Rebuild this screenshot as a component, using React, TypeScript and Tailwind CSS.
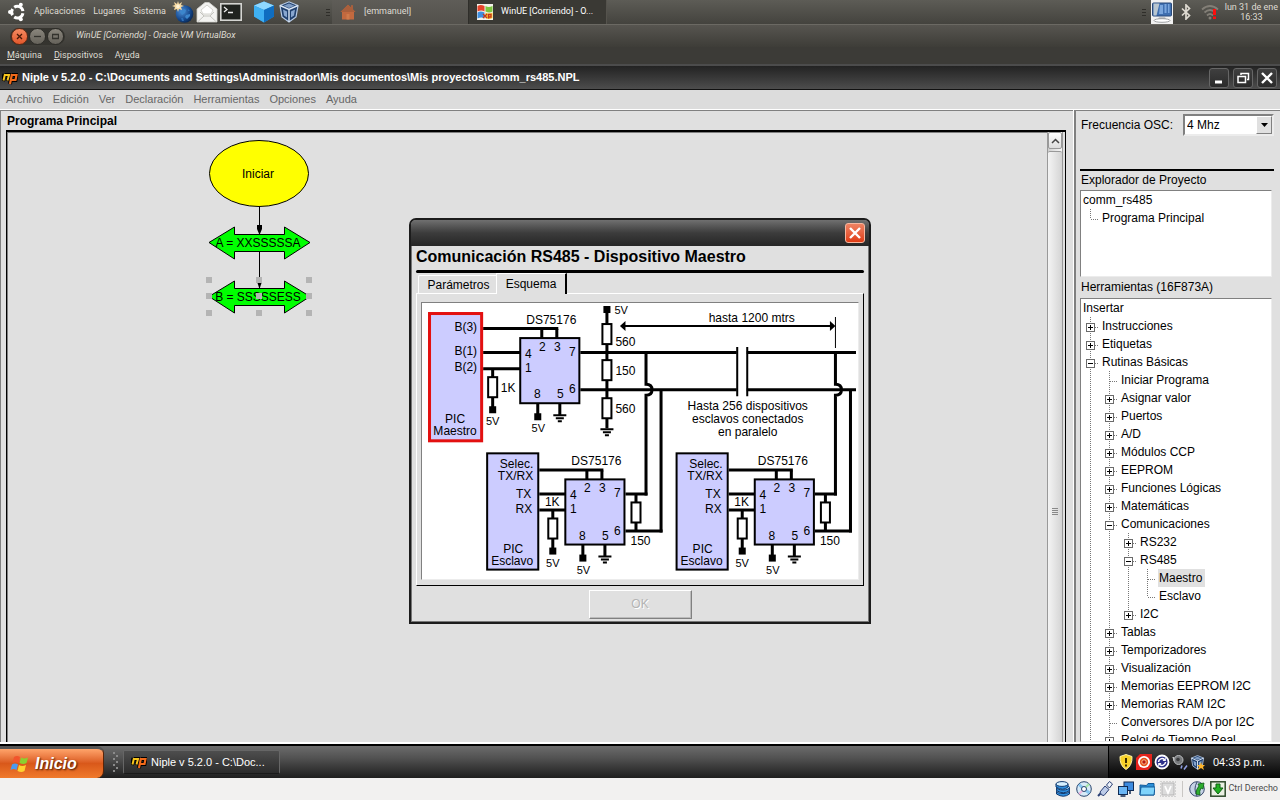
import React from "react";

const UI = "font-['Liberation_Sans',Arial,sans-serif]";
const GNOME = "font-['Roboto','Noto_Sans',sans-serif]";

/* ---------- Icons ---------- */

function UbuntuIcon() {
  return (
    <svg width="20" height="20" viewBox="0 0 20 20" fill="none" stroke="#fff" strokeWidth="3">
      <path d="M7.2 5.2A5.6 5.6 0 0 1 15.9 9.2M15.9 11.2A5.6 5.6 0 0 1 7.2 15M5.6 13.2A5.6 5.6 0 0 1 5.6 7" />
      <g fill="#fff" stroke="none">
        <circle cx="3" cy="10" r="2" />
        <circle cx="13.8" cy="2.8" r="2" />
        <circle cx="13.8" cy="17.2" r="2" />
      </g>
    </svg>
  );
}

function GlobeIcon() {
  return (
    <svg width="22" height="22" viewBox="0 0 22 22">
      <defs>
        <radialGradient id="globe" cx="0.35" cy="0.35" r="0.8">
          <stop offset="0" stopColor="#4d8fd6" />
          <stop offset="0.6" stopColor="#14478c" />
          <stop offset="1" stopColor="#031a3c" />
        </radialGradient>
      </defs>
      <circle cx="12.5" cy="13" r="8.8" fill="url(#globe)" />
      <path d="M8 11l4-3 2 1-1 3-3 2zM14 14l4-1 0 2-3 3-2-2z" fill="#3c86cc" />
      <path d="M9 17l2 0 1 3-2 0zM16 8l2 2-2 0z" fill="#2d6fb8" />
      <path d="M6 0l1 3 3-2-1 3 3 1-3 1 1 3-3-1-1 3-1-3-3 1 1-3-3-1 3-1-1-3 3 2z" fill="#f6d9a2" />
      <circle cx="6" cy="5.4" r="1.8" fill="#fff4d8" />
    </svg>
  );
}

function MailIcon() {
  return (
    <svg width="22" height="22" viewBox="0 0 22 22">
      <path d="M1 8L9 1.5h4L21 8v13H1z" fill="#f3f3f1" stroke="#d0d0cc" strokeWidth="0.8" />
      <path d="M5 9l6-5 6 5-2 4H7z" fill="#fff" stroke="#c9c9c4" strokeWidth="0.8" />
      <path d="M2 20.500l6-5.500h6l6 5.500M4 11l4 4M18 11l-4 4" fill="none" stroke="#c4c4bf" strokeWidth="1" />
    </svg>
  );
}

function TerminalIcon() {
  return (
    <svg width="22" height="18" viewBox="0 0 22 18">
      <rect x="0.8" y="0.8" width="20.4" height="16.4" fill="#20231f" stroke="#d5d5d2" strokeWidth="1.6" />
      <path d="M4 4l3 2.5L4 9M8 9.5h5" fill="none" stroke="#e9e9e9" strokeWidth="1.3" />
    </svg>
  );
}

function BlueCubeIcon() {
  return (
    <svg width="22" height="22" viewBox="0 0 22 22">
      <path d="M1 4.5L11 0.5l10 4v11L11 21.5 1 15.5z" fill="#1e8fe0" />
      <path d="M1 4.5L11 0.5l10 4L11 9z" fill="#8fd8ff" />
      <path d="M1 4.5L11 9v12.5L1 15.5z" fill="#3fb0f2" />
      <path d="M21 4.5L11 9v12.5l10-6z" fill="#0f6dc0" />
    </svg>
  );
}

function VBoxIcon({ size = 22 }: { size?: number }) {
  return (
    <svg width={size} height={size} viewBox="0 0 22 22">
      <path d="M2 4.5L11 0.8l9 3.7-2 11.5-7 5-7-5z" fill="#20406e" stroke="#b9cce6" strokeWidth="1.2" />
      <path d="M2 4.5L11 8.5l9-4M11 8.5V21" fill="none" stroke="#dce7f5" strokeWidth="1.4" />
      <path d="M5.5 4.7L11 2.4l5.5 2.3L11 7z" fill="#7f9cc4" />
      <path d="M5 8.5l4 2v6l-3-2zM17 8.5l-4 2v6l3-2z" fill="#88a6cf" />
    </svg>
  );
}

function HomeIcon() {
  return (
    <svg width="16" height="16" viewBox="0 0 16 16">
      <path d="M8 0.8L0.5 8H2v7.5h12V8h1.5L13 5.6V1.5h-2v2.1z" fill="#c2693f" />
      <path d="M8 0.8L0.5 8h15L13 5.6V1.5h-2v2.1z" fill="#a95f3c" />
      <path d="M6.5 15.5V10h3v5.500z" fill="#d07a4b" />
    </svg>
  );
}

function XpBoxIcon() {
  return (
    <svg width="16" height="16" viewBox="0 0 16 16">
      <rect width="16" height="16" fill="#f4f2ea" />
      <path d="M0.500 2q3-2 7 0v5.500q-3-2-7 0z" fill="#e8432a" />
      <path d="M8.500 2q3 2 7 0v5.500q-3 2-7 0z" fill="#7cc63e" />
      <path d="M0.500 8.500q3-2 7 0v6q-3-2-7 0z" fill="#3f8fe0" />
      <path d="M8.500 8.500q3 2 7 0v5.500q-3 2-7 0z" fill="#f6c12e" />
      <path d="M6 10l4 4M10 10l-4 4M11.500 14.500v-4h2.500v2.500h-2.500" fill="none" stroke="#c3361b" strokeWidth="1.300" />
    </svg>
  );
}

function MonitorIcon() {
  return (
    <svg width="22" height="24" viewBox="0 0 22 24">
      <rect width="22" height="24" fill="#f1f1f1" />
      <rect x="1.5" y="3" width="19" height="13" rx="1" fill="#3f6fb0" stroke="#2a4a7a" />
      <path d="M2.500 3.500h6l-3 12h-3z" fill="#b9c6cf" />
      <path d="M9 5h3v9H8zM13.500 4h2v9h-2zM17 4h1.500v9H17z" fill="#7aa6dd" />
      <path d="M8 17h6l1 2H7z" fill="#c4c6c8" />
      <ellipse cx="11" cy="20.500" rx="8" ry="1.800" fill="#fff" stroke="#8a8d90" strokeWidth="0.8" />
    </svg>
  );
}

function BluetoothIcon() {
  return (
    <svg width="10" height="16" viewBox="0 0 10 16" fill="none" stroke="#dfdbd2" strokeWidth="1.700">
      <path d="M1 4.500l7.500 7L5 15V1l3.500 3.500-7.500 7" />
    </svg>
  );
}

function WifiAlertIcon() {
  return (
    <svg width="18" height="16" viewBox="0 0 18 16">
      <g fill="none" stroke="#837f77" strokeWidth="1.800">
        <path d="M1 5.500q8-7 16 0" />
        <path d="M3.500 8.500q5.500-5 11 0" />
        <path d="M6 11.500q3-3 6 0" />
      </g>
      <circle cx="9" cy="14" r="1.500" fill="#837f77" />
      <path d="M12 5h3v6h-3zM12 12.500h3v2.500h-3z" fill="#ff0d0d" />
    </svg>
  );
}

function NipleIcon() {
  return (
    <svg width="16" height="14" viewBox="0 0 16 14" fill="none">
      <path d="M2.500 3L1 10M2.500 4h4.500L5.500 10" stroke="#000" strokeWidth="4" />
      <path d="M10 3L8 13M10 4h4.500l-1 5H9" stroke="#000" strokeWidth="4" />
      <path d="M3 3L1.500 9.500M3 4h4L5.500 9.500" stroke="#f7c51c" strokeWidth="2" />
      <path d="M10 3L8 13M10 4h4.500l-1 5H9" stroke="#f26a1a" strokeWidth="2.200" />
    </svg>
  );
}

function WindowsFlag() {
  return (
    <svg width="20" height="18" viewBox="0 0 20 18">
      <path d="M4 2q3-2 6 0L8.500 8q-3-2-6 0z" fill="#f2552c" />
      <path d="M11 2.500q3 2 7 0L16.500 8q-3 2-7 0z" fill="#8bd02f" />
      <path d="M2 9.500q3-2 6 0L6.500 15q-3-2-6 0z" fill="#4b9bf0" />
      <path d="M9 10q3 2 7 0L14.500 16q-3 2-7 0z" fill="#ffd12f" />
    </svg>
  );
}

function TrayIcons() {
  return (
    <div className="flex items-center gap-[2px]">
      <svg width="16" height="16" viewBox="0 0 16 16">
        <path d="M8 0.500l6 2q.5 9-6 13Q1.500 11.500 2 2.500z" fill="#f8d22a" stroke="#fff3a8" />
        <path d="M7 4h2v5H7zM7 10.500h2v2H7z" fill="#3a2c00" />
      </svg>
      <svg width="16" height="16" viewBox="0 0 16 16">
        <path d="M4 0h12v12l-4 4H0V4z" fill="#e5241d" />
        <circle cx="8" cy="8" r="6" fill="#fff" />
        <circle cx="8" cy="8" r="4.200" fill="#e5541d" />
        <circle cx="8" cy="8" r="2.200" fill="#b9170c" stroke="#ffd7a8" strokeWidth="0.800" />
      </svg>
      <svg width="16" height="16" viewBox="0 0 16 16">
        <circle cx="8" cy="8" r="6.500" fill="#2c2f8a" stroke="#fff" strokeWidth="1.800" />
        <path d="M4.500 8a3.500 3.500 0 0 1 6-2.300M11.500 8a3.500 3.500 0 0 1-6 2.300" fill="none" stroke="#fff" strokeWidth="1.500" />
        <path d="M11.800 3.500v3.500H8.500zM4.200 12.500V9h3.300z" fill="#fff" />
      </svg>
      <svg width="16" height="16" viewBox="0 0 16 16">
        <path d="M1 3l3 5-2-1z" fill="#bbb" stroke="#ccc" />
        <circle cx="6.500" cy="6" r="4.500" fill="#77797c" stroke="#b9bbbd" />
        <circle cx="6" cy="5.500" r="1.800" fill="#3a3b3d" />
        <path d="M9 14.500l1-3M12 15.500l3-4" fill="none" stroke="#8f9ee0" strokeWidth="1.600" />
      </svg>
      <span className="relative flex">
        <VBoxIcon size={15} />
        <svg className="absolute right-0 bottom-0" width="8" height="8" viewBox="0 0 8 8">
          <path d="M4 0l1 3h3L6 5l1 3-3-2-3 2 1-3-2-2h3z" fill="#ffb52b" />
        </svg>
      </span>
    </div>
  );
}

const statusIcons: { name: string; art: React.ReactNode }[] = [
  {
    name: "Discos duros",
    art: (
      <g stroke="#123a6e" strokeWidth="1">
        <path d="M1.500 10v3q7 4.500 13 0v-3z" fill="#2f8fe0" />
        <ellipse cx="8" cy="10" rx="6.500" ry="2.500" fill="#9fd8ff" />
        <path d="M1.500 6.500v3q7 4.500 13 0v-3z" fill="#2f8fe0" />
        <ellipse cx="8" cy="6.500" rx="6.500" ry="2.500" fill="#9fd8ff" />
        <path d="M1 3v3q7 4.500 12 0V3z" fill="#2f8fe0" />
        <ellipse cx="7" cy="3" rx="6" ry="2.400" fill="#d6f0ff" />
      </g>
    ),
  },
  {
    name: "CD/DVD",
    art: (
      <g>
        <circle cx="8" cy="8" r="7.300" fill="#d8ebf8" stroke="#28456e" />
        <path d="M8 8L3 3.500M8 8l5.500 4" stroke="#86c6f0" strokeWidth="3" />
        <path d="M8 8l5-5" stroke="#a7e7a9" strokeWidth="2" />
        <path d="M8 8l-5 5" stroke="#f2b9e0" strokeWidth="2" />
        <circle cx="8" cy="8" r="2.500" fill="#fff" stroke="#28456e" />
      </g>
    ),
  },
  {
    name: "USB",
    art: (
      <g stroke="#2a3f74" strokeWidth="1">
        <path d="M1 15l3-3" strokeWidth="2" />
        <path d="M3 11l5-6 4 3.500-5 6q-3 .5-4-3.500z" fill="#bccbe8" />
        <path d="M9.500 4l3-3.500 3 2.500-3 4z" fill="#eef3fb" />
      </g>
    ),
  },
  {
    name: "Red",
    art: (
      <g>
        <rect x="6" y="1" width="9.500" height="8.500" fill="#3c8be0" stroke="#102a52" />
        <rect x="0.500" y="5.500" width="9" height="8" fill="#6bb6f5" stroke="#102a52" />
        <path d="M2.500 15h5M12 10v3" stroke="#102a52" strokeWidth="1.500" />
      </g>
    ),
  },
  {
    name: "Carpetas compartidas",
    art: (
      <g stroke="#125a99">
        <path d="M1 4V14h14V2.500H9L7.500 4.500z" fill="#2a8fd8" />
        <path d="M1 14l1-8h14l-1 8z" fill="#7fd3fb" />
      </g>
    ),
  },
  {
    name: "Virtualización",
    art: (
      <g stroke="#b5b5b5" fill="none">
        <rect x="2" y="2" width="12" height="12" fill="#dcdcdc" />
        <rect x="0.500" y="0.500" width="15" height="15" strokeDasharray="1 2" />
        <path d="M5 5l3 7 3-7" stroke="#fff" strokeWidth="1.800" />
      </g>
    ),
  },
];

/* ---------- Host desktop ---------- */

function Grip() {
  return (
    <span className="flex flex-col gap-[2px]" aria-hidden="true">
      <i className="block h-px w-[4px] bg-[#2f2e2a]" />
      <i className="block h-px w-[4px] bg-[#2f2e2a]" />
      <i className="block h-px w-[4px] bg-[#2f2e2a]" />
    </span>
  );
}

function HostPanel() {
  return (
    <header className={`flex h-[24px] shrink-0 items-center bg-linear-to-b from-[#5d5c56] to-[#44433e] text-[9px] text-[#dfdbd2] ${GNOME}`}>
      <div className="flex w-[332px] shrink-0 items-center pl-[7px]">
        <UbuntuIcon />
        <nav className="ml-[7px] flex gap-[8px]">
          <button>Aplicaciones</button>
          <button>Lugares</button>
          <button>Sistema</button>
        </nav>
        <div className="ml-[6px] flex items-center gap-[2px]">
          <GlobeIcon />
          <MailIcon />
          <TerminalIcon />
        </div>
        <div className="ml-[11px] flex items-center gap-[3px]">
          <BlueCubeIcon />
          <VBoxIcon />
        </div>
        <div className="mr-[2px] ml-auto">
          <Grip />
        </div>
      </div>
      <button className="flex h-full w-[137px] items-center gap-[8px] border-r border-[#2f2e2a] bg-linear-to-b from-[#5f5d58] to-[#53514c] pl-[8px]">
        <HomeIcon />
        [emmanuel]
      </button>
      <button className="flex h-full w-[138px] items-center gap-[8px] border-r border-[#55534d] bg-[#3a3934] pl-[8px] text-white">
        <XpBoxIcon />
        WinUE [Corriendo] - O...
      </button>
      <div className="ml-auto flex h-full items-center pr-[2px]">
        <Grip />
        <span className="ml-[5px]"><MonitorIcon /></span>
        <span className="ml-[8px]"><BluetoothIcon /></span>
        <span className="ml-[10px]"><WifiAlertIcon /></span>
        <time className="ml-[6px] text-center leading-[10px]">
          lun 31 de ene
          <br />
          16:33
        </time>
      </div>
    </header>
  );
}

function HostWindowChrome() {
  return (
    <div className={`shrink-0 text-[#dfdbd2] ${GNOME}`}>
      <div className="flex h-[23px] items-center border-t border-[#6b6963] bg-linear-to-b from-[#575550] to-[#3e3d38] pl-[10px]">
        <div className="flex items-center gap-[1px] rounded-full bg-[#35342f] px-px">
          <button aria-label="Cerrar" className="flex size-[17px] items-center justify-center rounded-full border border-[#5e2a14] bg-linear-to-b from-[#f58a60] to-[#e2572a]">
            <svg width="7" height="7" viewBox="0 0 7 7" stroke="#4a1a08" strokeWidth="1.300"><path d="M1 1l5 5M6 1L1 6" /></svg>
          </button>
          <button aria-label="Minimizar" className="flex size-[17px] items-center justify-center rounded-full border border-[#2d2c28] bg-linear-to-b from-[#8a867d] to-[#65625a]">
            <svg width="7" height="7" viewBox="0 0 7 7" stroke="#33322d" strokeWidth="1.300"><path d="M0 3.500h7" /></svg>
          </button>
          <button aria-label="Maximizar" className="flex size-[17px] items-center justify-center rounded-full border border-[#2d2c28] bg-linear-to-b from-[#8a867d] to-[#65625a]">
            <svg width="7" height="7" viewBox="0 0 7 7" stroke="#33322d" strokeWidth="1.300" fill="none"><path d="M.5 1.500h6v4h-6z" /></svg>
          </button>
        </div>
        <span className="ml-[11px] text-[9px] italic">WinUE [Corriendo] - Oracle VM VirtualBox</span>
      </div>
      <nav className="flex h-[17px] items-center gap-[12px] bg-[#3c3b37] pl-[7px] text-[9px]">
        <button><u>M</u>áquina</button>
        <button><u>D</u>ispositivos</button>
        <button>Ay<u>u</u>da</button>
      </nav>
    </div>
  );
}

/* ---------- Guest application ---------- */

function TitleButton({ label, children }: { label: string; children: React.ReactNode }) {
  return (
    <button aria-label={label} className="flex size-[20px] items-center justify-center rounded-[3px] border border-[#666] bg-linear-to-b from-[#3f3f3f] to-[#2b2b2b]">
      <svg width="14" height="14" viewBox="0 0 14 14" fill="none" stroke="#fff" strokeWidth="2">{children}</svg>
    </button>
  );
}

function AppTitle() {
  return (
    <div className="flex h-[26px] shrink-0 items-center border-t-2 border-b border-t-[#4c4c4c] border-b-[#111] bg-linear-to-b from-[#232323] to-[#4d4d4d] pr-[3px] pl-[2px]">
      <NipleIcon />
      <h1 className="ml-[4px] text-[11px] font-bold whitespace-nowrap text-white">
        Niple v 5.2.0 - C:\Documents and Settings\Administrador\Mis documentos\Mis proyectos\comm_rs485.NPL
      </h1>
      <div className="ml-auto flex gap-[4px]">
        <TitleButton label="Minimizar"><path d="M3 11h7" strokeWidth="3" /></TitleButton>
        <TitleButton label="Restaurar">
          <path d="M5 4V2.500h7.500v6H11" strokeWidth="1.500" />
          <path d="M2 5.500h7.500v6H2z" strokeWidth="1.500" />
        </TitleButton>
        <TitleButton label="Cerrar"><path d="M2 2l10 10M12 2L2 12" strokeWidth="2.400" /></TitleButton>
      </div>
    </div>
  );
}

const menus = ["Archivo", "Edición", "Ver", "Declaración", "Herramientas", "Opciones", "Ayuda"];

type Row = { label: string; depth: number; kind?: "+" | "-"; selected?: boolean };

const projectRows: Row[] = [
  { label: "comm_rs485", depth: 0 },
  { label: "Programa Principal", depth: 1 },
];

const toolRows: Row[] = [
  { label: "Insertar", depth: 0 },
  { label: "Instrucciones", depth: 1, kind: "+" },
  { label: "Etiquetas", depth: 1, kind: "+" },
  { label: "Rutinas Básicas", depth: 1, kind: "-" },
  { label: "Iniciar Programa", depth: 2 },
  { label: "Asignar valor", depth: 2, kind: "+" },
  { label: "Puertos", depth: 2, kind: "+" },
  { label: "A/D", depth: 2, kind: "+" },
  { label: "Módulos CCP", depth: 2, kind: "+" },
  { label: "EEPROM", depth: 2, kind: "+" },
  { label: "Funciones Lógicas", depth: 2, kind: "+" },
  { label: "Matemáticas", depth: 2, kind: "+" },
  { label: "Comunicaciones", depth: 2, kind: "-" },
  { label: "RS232", depth: 3, kind: "+" },
  { label: "RS485", depth: 3, kind: "-" },
  { label: "Maestro", depth: 4, selected: true },
  { label: "Esclavo", depth: 4 },
  { label: "I2C", depth: 3, kind: "+" },
  { label: "Tablas", depth: 2, kind: "+" },
  { label: "Temporizadores", depth: 2, kind: "+" },
  { label: "Visualización", depth: 2, kind: "+" },
  { label: "Memorias EEPROM I2C", depth: 2, kind: "+" },
  { label: "Memorias RAM I2C", depth: 2, kind: "+" },
  { label: "Conversores D/A por I2C", depth: 2 },
  { label: "Reloj de Tiempo Real", depth: 2, kind: "+" },
];

function continues(rows: Row[], index: number, depth: number, openDepth: number) {
  for (let i = index + 1; i < rows.length; i++) {
    if (rows[i].depth < depth) return false;
    if (rows[i].depth === depth) return true;
  }
  return depth <= openDepth;
}

function Tree({ rows, openDepth = 0, label }: { rows: Row[]; openDepth?: number; label: string }) {
  return (
    <ul role="tree" aria-label={label} className="pl-[2px] text-[12px] whitespace-nowrap">
      {rows.map((row, i) => (
        <li key={row.label} role="treeitem" aria-level={row.depth + 1} aria-selected={!!row.selected} className="flex h-[18px]">
          {Array.from({ length: row.depth }, (_, c) => {
            const own = c === row.depth - 1;
            const down = continues(rows, i, c + 1, openDepth);
            return (
              <svg key={c} width="19" height="18" viewBox="0 0 19 18" fill="none" stroke="#777" className="shrink-0">
                {(own || down) && <path d={down ? "M7.500 0V18" : "M7.500 0V10"} strokeDasharray="1 1" />}
                {own && <path d="M8 10.500H16" strokeDasharray="1 1" />}
                {own && row.kind && (
                  <>
                    <rect x="3.500" y="6.500" width="8" height="8" fill="#fff" stroke="#6b6b6b" />
                    <path d={row.kind === "+" ? "M5 10.500H10M7.500 8V13" : "M5 10.500H10"} stroke="#000" />
                  </>
                )}
              </svg>
            );
          })}
          <button className={`-ml-[1px] flex h-[18px] items-center px-[1px] ${row.selected ? "bg-[#e0e0e0] pr-[3px]" : ""}`}>{row.label}</button>
        </li>
      ))}
    </ul>
  );
}

const sunken = "border-2 border-t-[#808080] border-l-[#808080] border-r-[#ececec] border-b-[#ececec] bg-white";
const sunkenThin = "border border-t-[#808080] border-l-[#808080] border-r-[#ececec] border-b-[#ececec] bg-white";

function Sidebar() {
  return (
    <aside className="flex w-[206px] shrink-0 flex-col border-t border-l-2 border-[#808080] bg-[#e0e0e0] pr-[6px] pl-[4px] text-[12px]">
      <div className="flex items-center justify-between pt-[3px] pl-px">
        <label htmlFor="osc">Frecuencia OSC:</label>
        <span className={`relative flex h-[22px] w-[91px] ${sunken}`}>
          <select id="osc" className="w-full appearance-none pl-[2px] text-[12px]" defaultValue="4">
            <option value="4">4 Mhz</option>
          </select>
          <span className="pointer-events-none absolute top-0 right-0 flex h-full w-[16px] items-center justify-center border border-t-white border-r-[#808080] border-b-[#808080] border-l-white bg-[#e0e0e0]">
            <svg width="7" height="4" viewBox="0 0 7 4"><path d="M0 0h7L3.500 4z" /></svg>
          </span>
        </span>
      </div>
      <hr className="mt-[33px] h-[2px] shrink-0 border-0 bg-black" />
      <h2 className="h-[19px] shrink-0 pl-px leading-[19px]">Explorador de Proyecto</h2>
      <div className={`mr-[2px] h-[87px] shrink-0 ${sunkenThin}`}>
        <Tree rows={projectRows} label="Explorador de Proyecto" />
      </div>
      <h2 className="h-[21px] shrink-0 pl-px leading-[21px]">Herramientas (16F873A)</h2>
      <div className={`mr-[2px] min-h-0 flex-1 overflow-hidden ${sunkenThin}`}>
        <Tree rows={toolRows} openDepth={2} label="Herramientas" />
      </div>
    </aside>
  );
}

const handles = [
  [206, 277], [256, 277], [306, 277],
  [206, 293], [256, 293], [306, 293],
  [206, 310], [256, 310], [306, 310],
];

function FlowChart() {
  return (
    <svg width="320" height="200" viewBox="8 133 320 200" className={UI} fontSize="12" textAnchor="middle">
      <ellipse cx="259" cy="173.500" rx="49.500" ry="33" fill="#ff0" stroke="#000" />
      <text x="258" y="178">Iniciar</text>
      <path d="M259.500 207V234M259.500 251V288" stroke="#000" />
      <path d="M257 225h5v4l-2.500 6-2.500-6z" />
      <path d="M209 242.500L234.500 227v7.500h50V227L310 242.500 284.500 259v-7.500h-50V259z" fill="#0f0" stroke="#000" />
      <path d="M209 296.500L234.500 281v7.500h50V281L310 296.500 284.500 313v-7.500h-50V313z" fill="#0f0" stroke="#000" />
      <path d="M257.500 283h4l-2 6z" />
      <text x="258" y="247">A = XXSSSSSA</text>
      <text x="258" y="301">B = SSSSSESS</text>
      {handles.map(([x, y]) => (
        <rect key={`${x}-${y}`} x={x} y={y} width="6" height="6" fill="#b4b4b4" />
      ))}
    </svg>
  );
}

function ProgramPanel() {
  return (
    <main className="flex min-w-0 flex-1 flex-col border-t border-l border-[#808080] bg-[#e0e0e0] pr-[7px]">
      <h2 className="h-[19px] pl-[6px] text-[12px] leading-[20px] font-bold">Programa Principal</h2>
      <div className="ml-[5px] flex min-h-0 flex-1 border-t-2 border-r border-l border-black">
        <div className="min-w-0 flex-1 overflow-hidden border-t border-l border-[#808080]">
          <FlowChart />
        </div>
        <div className="mr-[2px] flex w-[16px] flex-col border-x border-[#999] bg-linear-to-r from-[#cfcfcf] to-[#f8f8f8]">
          <button aria-label="Subir" className="flex h-[17px] items-center justify-center rounded-[2px] border border-[#999] bg-linear-to-b from-white to-[#dcdcdc]">
            <svg width="9" height="6" viewBox="0 0 9 6" fill="none" stroke="#444" strokeWidth="1.500"><path d="M1 5l3.500-3.500L8 5" /></svg>
          </button>
          <div className="mt-[2px] flex flex-1 items-center justify-center rounded-t-[2px] border-t border-[#999] bg-linear-to-r from-[#f4f4f4] to-[#d4d4d4] pt-[128px]">
            <span className="flex flex-col gap-px">
              <i className="block h-px w-[6px] bg-[#888]" />
              <i className="block h-px w-[6px] bg-[#888]" />
              <i className="block h-px w-[6px] bg-[#888]" />
              <i className="block h-px w-[6px] bg-[#888]" />
            </span>
          </div>
        </div>
      </div>
    </main>
  );
}

/* ---------- RS485 schematic ---------- */

function Ground({ x, y }: { x: number; y: number }) {
  return <path d={`M${x - 6.5} ${y}h13M${x - 4} ${y + 3}h8M${x - 2} ${y + 6}h4`} strokeWidth="2" />;
}

function Transceiver({ x, y }: { x: number; y: number }) {
  return (
    <g transform={`translate(${x} ${y})`}>
      <path d="M21.500 -9V0M36.500 -9V0M17.500 65V77M39.500 65V77" strokeWidth="3" />
      <rect x="0" y="0" width="59" height="65" fill="#ccf" strokeWidth="2" />
      <rect x="14" y="75" width="7" height="7" fill="#000" stroke="none" />
      <Ground x={39.5} y={77} />
      <g fill="#000" stroke="none" textAnchor="middle">
        <text x="8" y="20">4</text>
        <text x="8" y="34">1</text>
        <text x="22" y="13">2</text>
        <text x="37" y="13">3</text>
        <text x="52" y="18">7</text>
        <text x="52" y="55">6</text>
        <text x="17" y="60">8</text>
        <text x="40" y="60">5</text>
        <text x="18" y="94" fontSize="11">5V</text>
      </g>
    </g>
  );
}

function PullUp({ x, y }: { x: number; y: number }) {
  return (
    <g transform={`translate(${x} ${y})`}>
      <path d="M0 0V40" strokeWidth="3" />
      <rect x="-4.500" y="9" width="9" height="20" fill="#fff" strokeWidth="2" />
      <rect x="-3.500" y="38" width="7" height="7" fill="#000" stroke="none" />
      <text x="0" y="57" fontSize="11" textAnchor="middle" fill="#000" stroke="none">5V</text>
    </g>
  );
}

function Slave({ dx, chipLabelX }: { dx: number; chipLabelX: number }) {
  return (
    <g transform={`translate(${dx} 0)`}>
      <path d="M539 469.500H603M539 493.500H565M539 509.500H565M625 493.500H647M625 530.500H662M635.500 493V530" strokeWidth="3" />
      <rect x="487" y="453" width="51" height="116" fill="#ccf" strokeWidth="2" />
      <Transceiver x={565} y={479} />
      <PullUp x={552.5} y={509} />
      <rect x="631" y="502" width="9" height="20" fill="#fff" strokeWidth="2" />
      <g fill="#000" stroke="none">
        <g textAnchor="end">
          <text x="533" y="468">Selec.</text>
          <text x="533" y="480">TX/RX</text>
          <text x="531" y="498">TX</text>
          <text x="532" y="513">RX</text>
        </g>
        <g textAnchor="middle">
          <text x="513" y="552">PIC</text>
          <text x="512" y="564">Esclavo</text>
          <text x={chipLabelX} y="465">DS75176</text>
          <text x="552" y="506">1K</text>
        </g>
        <text x="630" y="544">150</text>
      </g>
    </g>
  );
}

function Schematic() {
  return (
    <svg viewBox="422 303 435 275" className={`block w-full ${UI}`} fontSize="12" fill="none" stroke="#000" role="img" aria-label="Esquema RS485">
      <path d="M483 328.500H558M483 352.500H520M483 368.500H520" strokeWidth="3" />
      <path d="M580 352.500H736M746 352.500H855M580 389.500H736M746 389.500H855" strokeWidth="3" />
      <path d="M736.500 347V396M746.500 347V396" strokeWidth="2" />
      <rect x="429.500" y="313.500" width="52" height="127" fill="#ccf" stroke="#e31010" strokeWidth="3" />
      <Transceiver x={520} y={338} />
      <PullUp x={492.5} y={368} />

      <path d="M606.500 310V428" strokeWidth="3" />
      <rect x="603" y="306" width="7" height="7" fill="#000" stroke="none" />
      <g fill="#fff" strokeWidth="2">
        <rect x="602" y="324" width="9" height="20" />
        <rect x="602" y="360" width="9" height="20" />
        <rect x="602" y="398" width="9" height="20" />
      </g>
      <Ground x={606.5} y={429} />

      <path d="M622 326H832" strokeWidth="2" />
      <path d="M619.500 326l5.500-5v10zM834.500 326l-5.500-5v10z" fill="#000" stroke="none" />
      <path d="M834.500 317V348" />

      <path d="M645.500 352V384q6 0 6 5.500t-6 5.500V495M834.500 352V384q6 0 6 5.500t-6 5.500V495" strokeWidth="3" />
      <path d="M660.500 389V532M849.500 389V532" strokeWidth="3" />

      <Slave dx={0} chipLabelX={596} />
      <Slave dx={189} chipLabelX={593} />

      <g fill="#000" stroke="none">
        <g textAnchor="end">
          <text x="477" y="331">B(3)</text>
          <text x="477" y="355">B(1)</text>
          <text x="477" y="371">B(2)</text>
        </g>
        <g textAnchor="middle">
          <text x="455" y="423">PIC</text>
          <text x="455" y="435">Maestro</text>
          <text x="551" y="324">DS75176</text>
          <text x="508" y="392">1K</text>
          <text x="751" y="322">hasta 1200 mtrs</text>
          <text x="747" y="410">Hasta 256 dispositivos</text>
          <text x="747" y="423">esclavos conectados</text>
          <text x="747" y="436">en paralelo</text>
        </g>
        <text x="614" y="314" fontSize="11">5V</text>
        <text x="615" y="346">560</text>
        <text x="615" y="375">150</text>
        <text x="615" y="413">560</text>
      </g>
    </svg>
  );
}

function Rs485Dialog() {
  return (
    <section role="dialog" aria-labelledby="rs485-title" className="absolute top-[218px] left-[409px] w-[462px] rounded-t-[7px] border-2 border-[#1c1c1c] bg-[#e0e0e0] shadow-[inset_0_0_0_1px_#777]">
      <div className="flex h-[26px] items-center justify-end rounded-t-[5px] bg-linear-to-b from-[#707070] via-[#3c3c3c] via-50% to-[#262626] pr-[4px]">
        <button aria-label="Cerrar" className="flex size-[20px] items-center justify-center rounded-[3px] border border-[#f7b7a0] bg-linear-to-b from-[#ee8262] to-[#e03a10]">
          <svg width="12" height="12" viewBox="0 0 12 12" stroke="#fff" strokeWidth="2.400"><path d="M1 1l10 10M11 1L1 11" /></svg>
        </button>
      </div>
      <div className="px-[5px] pb-[3px]">
        <h2 id="rs485-title" className="h-[24px] text-[16px] leading-[21px] font-bold whitespace-nowrap">
          Comunicación RS485 - Dispositivo Maestro
        </h2>
        <hr className="h-[3px] rounded-full border-0 bg-black" />
        <div role="tablist" className="flex items-end text-[12px]">
          <button role="tab" aria-selected="false" className="ml-[2px] h-[18px] w-[78px] rounded-tl-[2px] border-t border-l border-white pl-[2px]">
            Parámetros
          </button>
          <button role="tab" aria-selected="true" className="relative -mb-px h-[21px] w-[71px] border-t border-r-2 border-l border-t-white border-r-black border-l-white bg-[#e0e0e0]">
            Esquema
          </button>
        </div>
        <div role="tabpanel" className="border border-t-white border-r-black border-b-black border-l-white px-[4px] pt-[8px] pb-[5px]">
          <div className={sunkenThin}>
            <Schematic />
          </div>
        </div>
        <div className="flex justify-center pt-[4px]">
          <button disabled className="h-[29px] w-[103px] border border-t-white border-r-[#808080] border-b-[#808080] border-l-white text-[12px] text-[#b4b4b4] shadow-[inset_-1px_-1px_0_#bbb] [text-shadow:1px_1px_0_#fff]">
            OK
          </button>
        </div>
      </div>
    </section>
  );
}

/* ---------- Bottom bars ---------- */

function Taskbar() {
  return (
    <footer className="flex h-[36px] shrink-0 border-t-2 border-white">
      <div className="flex min-w-0 flex-1 border-t-2 border-black bg-linear-to-b from-[#6c6c6c] via-[#505050] via-40% to-[#1f1f1f]">
        <button className="flex h-full w-[104px] items-center gap-[5px] rounded-r-[7px] border-t-3 border-r border-t-[#555] border-r-[#5a2408] bg-linear-to-b from-[#ffa46a] via-[#d9581a] via-50% to-[#f07a2c] pl-[10px] text-[16px] font-bold text-white italic [text-shadow:1px_1px_2px_#3a1500]">
          <WindowsFlag />
          Inicio
        </button>
        <svg className="ml-[7px] self-center" width="7" height="22" viewBox="0 0 7 22" fill="#8a8a8a" aria-hidden="true">
          <path d="M2 1h2v2H2zM5 4h2v2H5zM2 7h2v2H2zM5 10h2v2H5zM2 13h2v2H2zM5 16h2v2H5zM2 19h2v2H2z" />
        </svg>
        <button className="ml-[5px] flex h-[24px] w-[157px] items-center gap-[4px] self-center rounded-[2px] border border-[#666] border-b-[#1a1a1a] bg-linear-to-b from-[#4e4e4e] to-[#2c2c2c] pl-[7px] text-[11px] whitespace-nowrap text-white">
          <NipleIcon />
          Niple v 5.2.0 - C:\Doc...
        </button>
        <div className="ml-auto flex w-[172px] items-center gap-[8px] border-l border-black bg-linear-to-b from-[#4a4a4a] to-[#050505] pl-[9px] text-[11px] whitespace-nowrap text-white">
          <TrayIcons />
          <time>04:33 p.m.</time>
        </div>
      </div>
    </footer>
  );
}

function StatusBar() {
  return (
    <footer className={`flex h-[22px] shrink-0 items-center justify-end bg-[#f2f1f0] pr-[2px] text-[9px] text-[#4c4c4c] ${GNOME}`}>
      <div className="flex gap-[5px]">
        {statusIcons.map((icon) => (
          <svg key={icon.name} width="16" height="16" viewBox="0 0 16 16" role="img" aria-label={icon.name} fill="none">{icon.art}</svg>
        ))}
      </div>
      <span className="mx-[6px] h-[16px] w-px bg-[#c9c7c4]" />
      <svg width="16" height="16" viewBox="0 0 16 16" role="img" aria-label="Ratón">
        <circle cx="8" cy="8" r="7.300" fill="#c7d3e6" stroke="#3a4b6e" />
        <path d="M8 1q-4 7 0 14" fill="none" stroke="#3a4b6e" />
        <path d="M9 3l6-1-1 6-2-1q-2 3-1 7l-4-1q0-5 3-8z" fill="#2fae2f" stroke="#0f5f14" strokeWidth="0.800" />
      </svg>
      <svg className="ml-[5px]" width="16" height="16" viewBox="0 0 16 16" role="img" aria-label="Teclado">
        <rect x="0.800" y="0.800" width="14.400" height="14.400" fill="#e9efe2" stroke="#2e4a2a" strokeWidth="1.500" />
        <path d="M6 3h4v4h3l-5 6-5-6h3z" fill="#22b022" stroke="#0d5f12" />
      </svg>
      <span className="ml-[3px]">Ctrl Derecho</span>
    </footer>
  );
}

export default function App() {
  return (
    <div className={`relative flex h-screen flex-col overflow-hidden bg-[#e0e0e0] text-black ${UI}`}>
      <HostPanel />
      <HostWindowChrome />
      <AppTitle />
      <nav className="flex h-[20px] shrink-0 items-center gap-[10px] border-b border-white bg-[#dcdcdc] pl-[6px] text-[11px] text-[#666]">
        {menus.map((m) => (
          <button key={m}>{m}</button>
        ))}
      </nav>
      <div className="flex min-h-0 flex-1 gap-px bg-white">
        <ProgramPanel />
        <Sidebar />
      </div>
      <Taskbar />
      <StatusBar />
      <Rs485Dialog />
    </div>
  );
}
